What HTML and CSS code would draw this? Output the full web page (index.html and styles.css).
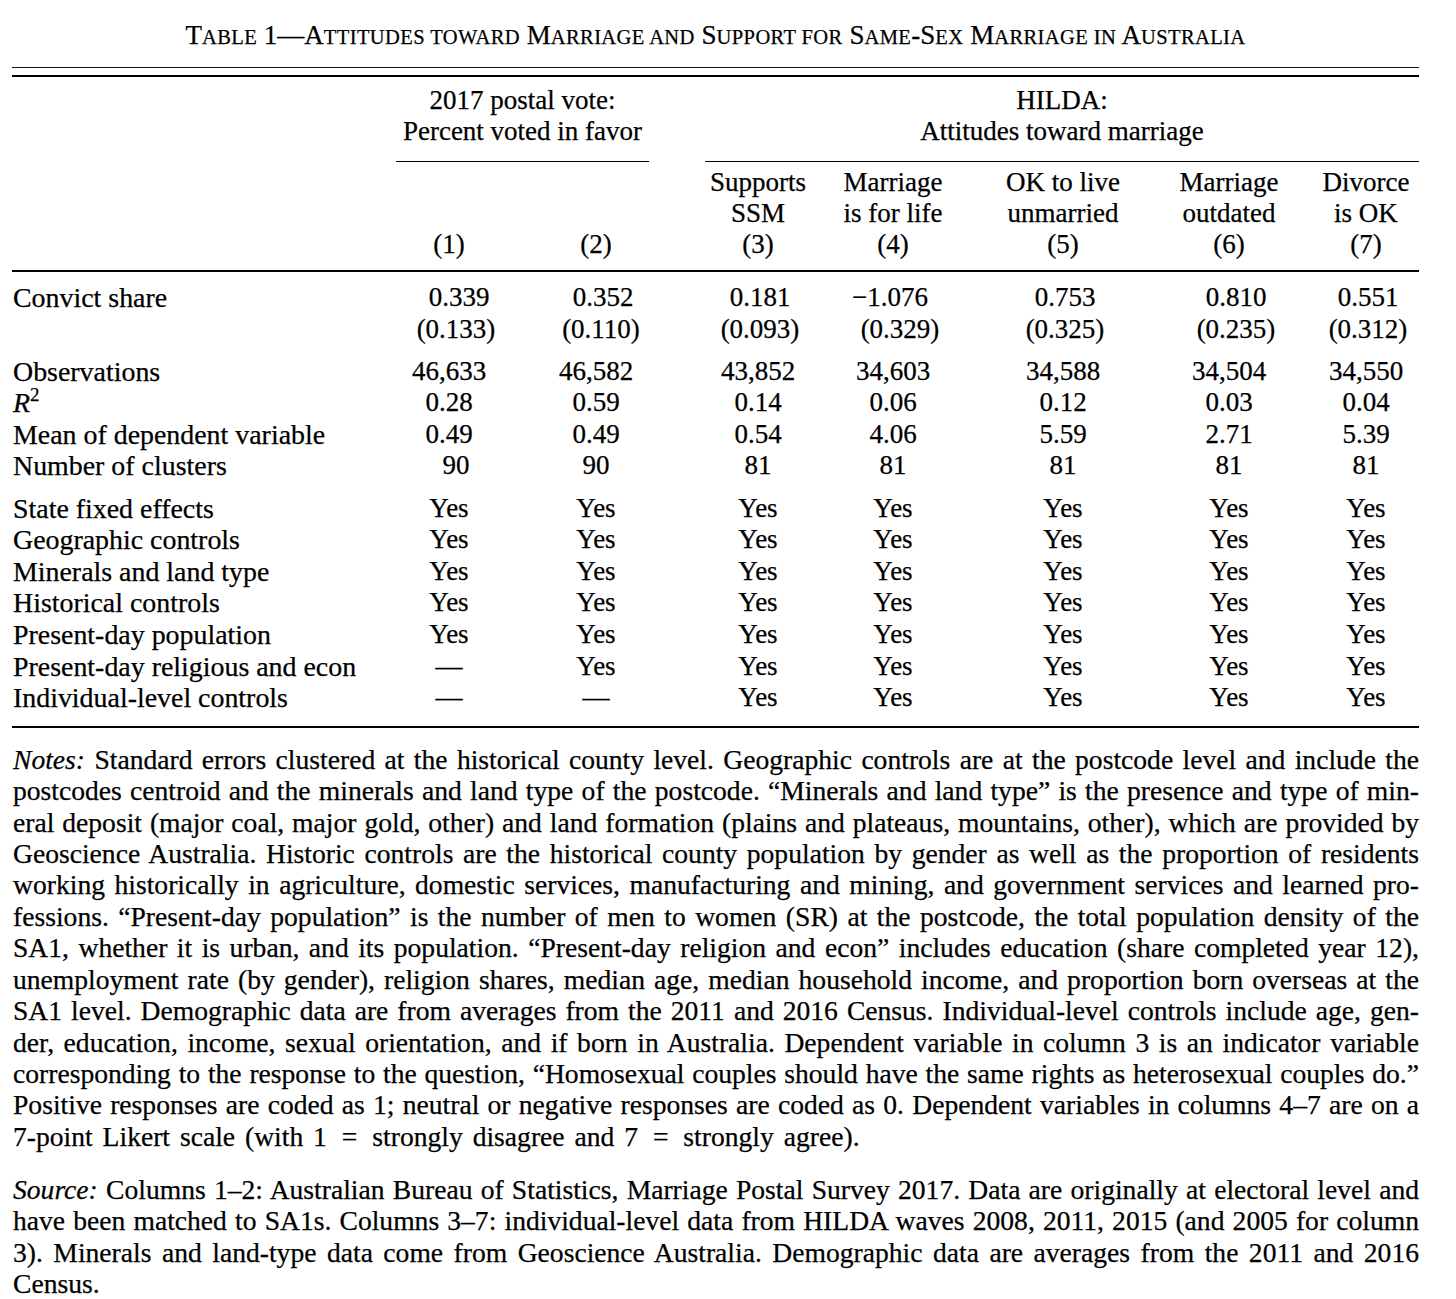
FILE: index.html
```html
<!DOCTYPE html>
<html lang="en">
<head>
<meta charset="utf-8">
<title>Table 1</title>
<link rel="stylesheet" href="styles.css">
</head>
<body>
<div class="page">
  <h1 class="title">T<span class="sc">able</span> 1—A<span class="sc">ttitudes toward</span> M<span class="sc">arriage and</span> S<span class="sc">upport for</span> S<span class="sc">ame</span>-S<span class="sc">ex</span> M<span class="sc">arriage in</span> A<span class="sc">ustralia</span></h1>
  <div class="rule-double"></div>

  <div class="thead cols">
    <div class="group g1">2017 postal vote:<br>Percent voted in favor</div>
    <div class="group g2">HILDA:<br>Attitudes toward marriage</div>

    <div class="label"></div>
    <div class="colhead c1">(1)</div>
    <div class="colhead c2">(2)</div>
    <div class="colhead c3">Supports<br>SSM<br>(3)</div>
    <div class="colhead c4">Marriage<br>is for life<br>(4)</div>
    <div class="colhead c5">OK to live<br>unmarried<br>(5)</div>
    <div class="colhead c6">Marriage<br>outdated<br>(6)</div>
    <div class="colhead c7">Divorce<br>is OK<br>(7)</div>
  </div>

  <div class="rule"></div>

  <div class="tbody">
    <div class="group-rows">
      <div class="row cols">
        <div class="label">Convict share</div>
        <div class="cell c1 nudge-10">0.339</div>
        <div class="cell c2 nudge-7">0.352</div>
        <div class="cell c3 nudge-2">0.181</div>
        <div class="cell c4 nudge-m3">−1.076</div>
        <div class="cell c5 nudge-2">0.753</div>
        <div class="cell c6 nudge-7">0.810</div>
        <div class="cell c7 nudge-2">0.551</div>
      </div>
      <div class="row cols">
        <div class="label"></div>
        <div class="cell c1 nudge-7">(0.133)</div>
        <div class="cell c2 nudge-5">(0.110)</div>
        <div class="cell c3 nudge-2">(0.093)</div>
        <div class="cell c4 nudge-7">(0.329)</div>
        <div class="cell c5 nudge-2">(0.325)</div>
        <div class="cell c6 nudge-7">(0.235)</div>
        <div class="cell c7 nudge-2">(0.312)</div>
      </div>
    </div>

    <div class="group-rows">
      <div class="row cols">
        <div class="label">Observations</div>
        <div class="cell c1">46,633</div>
        <div class="cell c2">46,582</div>
        <div class="cell c3">43,852</div>
        <div class="cell c4">34,603</div>
        <div class="cell c5">34,588</div>
        <div class="cell c6">34,504</div>
        <div class="cell c7">34,550</div>
      </div>
      <div class="row cols">
        <div class="label"><i>R</i><sup>2</sup></div>
        <div class="cell c1">0.28</div>
        <div class="cell c2">0.59</div>
        <div class="cell c3">0.14</div>
        <div class="cell c4">0.06</div>
        <div class="cell c5">0.12</div>
        <div class="cell c6">0.03</div>
        <div class="cell c7">0.04</div>
      </div>
      <div class="row cols">
        <div class="label">Mean of dependent variable</div>
        <div class="cell c1">0.49</div>
        <div class="cell c2">0.49</div>
        <div class="cell c3">0.54</div>
        <div class="cell c4">4.06</div>
        <div class="cell c5">5.59</div>
        <div class="cell c6">2.71</div>
        <div class="cell c7">5.39</div>
      </div>
      <div class="row cols">
        <div class="label">Number of clusters</div>
        <div class="cell c1 nudge-7">90</div>
        <div class="cell c2">90</div>
        <div class="cell c3">81</div>
        <div class="cell c4">81</div>
        <div class="cell c5">81</div>
        <div class="cell c6">81</div>
        <div class="cell c7">81</div>
      </div>
    </div>

    <div class="group-rows">
      <div class="row cols">
        <div class="label">State fixed effects</div>
        <div class="cell c1">Yes</div><div class="cell c2">Yes</div><div class="cell c3">Yes</div><div class="cell c4">Yes</div><div class="cell c5">Yes</div><div class="cell c6">Yes</div><div class="cell c7">Yes</div>
      </div>
      <div class="row cols">
        <div class="label">Geographic controls</div>
        <div class="cell c1">Yes</div><div class="cell c2">Yes</div><div class="cell c3">Yes</div><div class="cell c4">Yes</div><div class="cell c5">Yes</div><div class="cell c6">Yes</div><div class="cell c7">Yes</div>
      </div>
      <div class="row cols">
        <div class="label">Minerals and land type</div>
        <div class="cell c1">Yes</div><div class="cell c2">Yes</div><div class="cell c3">Yes</div><div class="cell c4">Yes</div><div class="cell c5">Yes</div><div class="cell c6">Yes</div><div class="cell c7">Yes</div>
      </div>
      <div class="row cols">
        <div class="label">Historical controls</div>
        <div class="cell c1">Yes</div><div class="cell c2">Yes</div><div class="cell c3">Yes</div><div class="cell c4">Yes</div><div class="cell c5">Yes</div><div class="cell c6">Yes</div><div class="cell c7">Yes</div>
      </div>
      <div class="row cols">
        <div class="label">Present-day population</div>
        <div class="cell c1">Yes</div><div class="cell c2">Yes</div><div class="cell c3">Yes</div><div class="cell c4">Yes</div><div class="cell c5">Yes</div><div class="cell c6">Yes</div><div class="cell c7">Yes</div>
      </div>
      <div class="row cols">
        <div class="label">Present-day religious and econ</div>
        <div class="cell c1">—</div><div class="cell c2">Yes</div><div class="cell c3">Yes</div><div class="cell c4">Yes</div><div class="cell c5">Yes</div><div class="cell c6">Yes</div><div class="cell c7">Yes</div>
      </div>
      <div class="row cols">
        <div class="label">Individual-level controls</div>
        <div class="cell c1">—</div><div class="cell c2">—</div><div class="cell c3">Yes</div><div class="cell c4">Yes</div><div class="cell c5">Yes</div><div class="cell c6">Yes</div><div class="cell c7">Yes</div>
      </div>
    </div>
  </div>

  <div class="rule"></div>

  <div class="notes">
    <p class="para">
      <span class="ln"><i>Notes:</i> Standard errors clustered at the historical county level. Geographic controls are at the postcode level and include the</span>
      <span class="ln">postcodes centroid and the minerals and land type of the postcode. “Minerals and land type” is the presence and type of min-</span>
      <span class="ln">eral deposit (major coal, major gold, other) and land formation (plains and plateaus, mountains, other), which are provided by</span>
      <span class="ln">Geoscience Australia. Historic controls are the historical county population by gender as well as the proportion of residents</span>
      <span class="ln">working historically in agriculture, domestic services, manufacturing and mining, and government services and learned pro-</span>
      <span class="ln">fessions. “Present-day population” is the number of men to women (SR) at the postcode, the total population density of the</span>
      <span class="ln">SA1, whether it is urban, and its population. “Present-day religion and econ” includes education (share completed year 12),</span>
      <span class="ln">unemployment rate (by gender), religion shares, median age, median household income, and proportion born overseas at the</span>
      <span class="ln">SA1 level. Demographic data are from averages from the 2011 and 2016 Census. Individual-level controls include age, gen-</span>
      <span class="ln">der, education, income, sexual orientation, and if born in Australia. Dependent variable in column 3 is an indicator variable</span>
      <span class="ln">corresponding to the response to the question, “Homosexual couples should have the same rights as heterosexual couples do.”</span>
      <span class="ln">Positive responses are coded as 1; neutral or negative responses are coded as 0. Dependent variables in columns 4–7 are on a</span>
      <span class="ln end">7-point Likert scale (with 1 <span class="eq">=</span> strongly disagree and 7 <span class="eq">=</span> strongly agree).</span>
    </p>
    <p class="para source">
      <span class="ln"><i>Source:</i> Columns 1–2: Australian Bureau of Statistics, Marriage Postal Survey 2017. Data are originally at electoral level and</span>
      <span class="ln">have been matched to SA1s. Columns 3–7: individual-level data from HILDA waves 2008, 2011, 2015 (and 2005 for column</span>
      <span class="ln">3). Minerals and land-type data come from Geoscience Australia. Demographic data are averages from the 2011 and 2016</span>
      <span class="ln end">Census.</span>
    </p>
  </div>
</div>
</body>
</html>
```

FILE: styles.css
```css
* {
  box-sizing: border-box;
}

html,
body {
  margin: 0;
  padding: 0;
  background: #ffffff;
}

body {
  font-family: "Liberation Serif", "Times New Roman", serif;
  font-size: 27px;
  color: #000000;
  -webkit-text-stroke: 0.25px #000000;
}

.page {
  width: 1419px;
  padding-left: 12px;
}

.title {
  margin: 0;
  padding-top: 20px;
  font-size: 27px;
  font-weight: normal;
  line-height: 31.5px;
  height: 51.5px;
  text-align: center;
}

.sc {
  text-transform: uppercase;
  font-size: 0.76em;
  letter-spacing: 0.4px;
}

.rule-double {
  margin-top: 15.5px;
  height: 10px;
  border-top: 1px solid #111;
  border-bottom: 2px solid #000;
}

.rule {
  height: 2px;
  background: #000;
}

.cols {
  display: grid;
  grid-template-columns: 364px 146px 148px 41px 94px 176px 164px 168px 106px;
}

.thead {
  padding-top: 7.5px;
  padding-bottom: 10px;
  line-height: 31px;
}

.group {
  grid-row: 1;
  text-align: center;
  padding-bottom: 14.5px;
  border-bottom: 1.5px solid #000;
}

.g1 {
  grid-column: 2 / 4;
  margin: 0 21px 0 20px;
}

.g2 {
  grid-column: 4 / 10;
  margin-left: 35px;
}

.colhead {
  grid-row: 2;
  margin-top: 5px;
  text-align: center;
  justify-self: center;
  white-space: nowrap;
  align-self: end;
}

.thead .label {
  grid-row: 2;
  grid-column: 1;
}

.c1 { grid-column: 2; }
.c2 { grid-column: 3; }
.c3 { grid-column: 5; }
.c4 { grid-column: 6; }
.c5 { grid-column: 7; }
.c6 { grid-column: 8; }
.c7 { grid-column: 9; }

.tbody {
  padding-top: 10px;
  padding-bottom: 12px;
}

.group-rows + .group-rows {
  margin-top: 10.5px;
}

.row {
  height: 31.6px;
  line-height: 31.6px;
}

.row .label {
  grid-column: 1;
  padding-left: 1px;
  white-space: nowrap;
  font-size: 27.9px;
}

.cell {
  justify-self: center;
  white-space: nowrap;
}

.nudge-2 { padding-left: 4px; }
.nudge-5 { padding-left: 10px; }
.nudge-7 { padding-left: 14px; }
.nudge-10 { padding-left: 20px; }
.nudge-m3 { padding-right: 6px; }

sup {
  font-size: 0.68em;
  line-height: 0;
  vertical-align: 0.6em;
}

.notes {
  padding-top: 16px;
}

.para {
  margin: 0;
  font-size: 27.6px;
  line-height: 31.42px;
  padding-left: 1px;
}

.source {
  margin-top: 21.5px;
}

.ln {
  display: block;
  white-space: nowrap;
  text-align: justify;
  text-align-last: justify;
}

.ln.end {
  text-align-last: left;
  word-spacing: 3px;
}

.eq {
  padding: 0 5px;
}
```
